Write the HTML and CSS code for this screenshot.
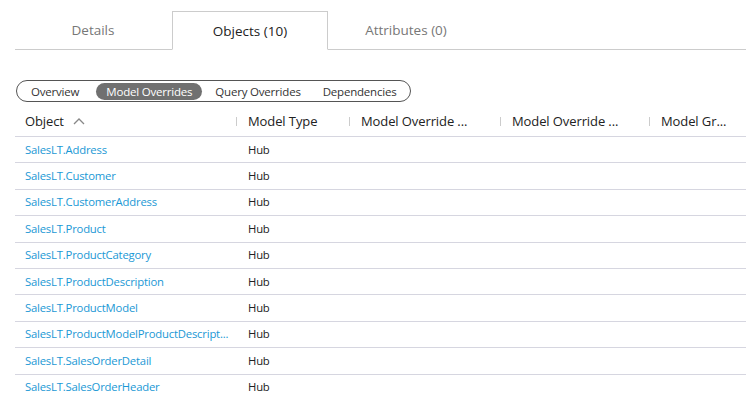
FILE: index.html
```html
<!DOCTYPE html>
<html>
<head>
<meta charset="utf-8">
<link rel="stylesheet" href="styles.css">
</head>
<body>
<div class="page">
  <div class="tabs">
    <div class="tab">Details</div>
    <div class="tab active">Objects (10)</div>
    <div class="tab">Attributes (0)</div>
  </div>
  <div class="pills">
    <span class="pill">Overview</span>
    <span class="pill on">Model Overrides</span>
    <span class="pill">Query Overrides</span>
    <span class="pill">Dependencies</span>
  </div>
  <div class="grid">
    <div class="row head">
      <div class="c c1">Object <svg class="sort" width="12" height="8" viewBox="0 0 12 8"><path d="M1 7 L6 2 L11 7" fill="none" stroke="#888" stroke-width="1.3"/></svg></div>
      <div class="c c2"><i class="sep"></i>Model Type</div>
      <div class="c c3"><i class="sep"></i>Model Override ...</div>
      <div class="c c4"><i class="sep"></i>Model Override ...</div>
      <div class="c c5"><i class="sep"></i>Model Gr...</div>
    </div>
    <div class="row"><div class="c c1"><a>SalesLT.Address</a></div><div class="c c2">Hub</div></div>
    <div class="row"><div class="c c1"><a>SalesLT.Customer</a></div><div class="c c2">Hub</div></div>
    <div class="row"><div class="c c1"><a>SalesLT.CustomerAddress</a></div><div class="c c2">Hub</div></div>
    <div class="row"><div class="c c1"><a>SalesLT.Product</a></div><div class="c c2">Hub</div></div>
    <div class="row"><div class="c c1"><a>SalesLT.ProductCategory</a></div><div class="c c2">Hub</div></div>
    <div class="row"><div class="c c1"><a>SalesLT.ProductDescription</a></div><div class="c c2">Hub</div></div>
    <div class="row"><div class="c c1"><a>SalesLT.ProductModel</a></div><div class="c c2">Hub</div></div>
    <div class="row"><div class="c c1"><a>SalesLT.ProductModelProductDescript...</a></div><div class="c c2">Hub</div></div>
    <div class="row"><div class="c c1"><a>SalesLT.SalesOrderDetail</a></div><div class="c c2">Hub</div></div>
    <div class="row"><div class="c c1"><a>SalesLT.SalesOrderHeader</a></div><div class="c c2">Hub</div></div>
  </div>
</div>
</body>
</html>
```
FILE: styles.css
```css
html, body { margin: 0; padding: 0; background: #fff; }
body { font-family: "Open Sans", "Noto Sans", sans-serif; color: #222; overflow: hidden; }
.page { width: 746px; height: 400px; }
.tabs {
  display: flex;
  margin: 11px 0 0 15px;
  border-bottom: 1px solid #ccc;
  height: 38px;
}
.tab {
  width: 156px;
  text-align: center;
  font-size: 13.5px;
  color: #777;
  line-height: 38px;
  box-sizing: border-box;
}
.tab.active {
  color: #222;
  border: 1px solid #ccc;
  border-bottom: 1px solid #fff;
  height: 39px;
  line-height: 38px;
  background: #fff;
  margin-left: 1px;
}
.pills {
  display: inline-flex;
  align-items: center;
  margin: 30px 0 0 16px;
  border: 1px solid #555;
  border-radius: 11px;
  height: 20px;
  padding: 0 2px 0 3px;
  font-size: 11.5px;
  letter-spacing: -0.2px;
}
.pill { padding: 0 11px; line-height: 17px; color: #333; border-radius: 9px; }
.pill.on { background: #707070; color: #fff; padding: 0 10px; margin: 0 2px 0 6px; }
.grid { margin: 4px 0 0 15px; }
.row {
  display: flex;
  height: 26.4px;
  border-bottom: 1px solid #d6d6e0;
  box-sizing: border-box;
  font-size: 11.3px;
  align-items: center;
  letter-spacing: -0.2px;
  padding-bottom: 1px;
}
.row.head { height: 31px; font-size: 13px; padding-bottom: 1px; letter-spacing: -0.1px; }
.c { position: relative; white-space: nowrap; box-sizing: border-box; }
.c1 { width: 221px; padding-left: 10px; }
.c2 { width: 113px; padding-left: 12px; }
.c3 { width: 151px; padding-left: 12px; }
.c4 { width: 149px; padding-left: 12px; }
.c5 { width: 97px; padding-left: 12px; }
.sep { position: absolute; left: 0; top: 50%; margin-top: -4px; width: 1px; height: 9px; background: #ccc; }
.sort { margin-left: 6px; vertical-align: 1px; }
a { color: #1a98d5; text-decoration: none; }
```
